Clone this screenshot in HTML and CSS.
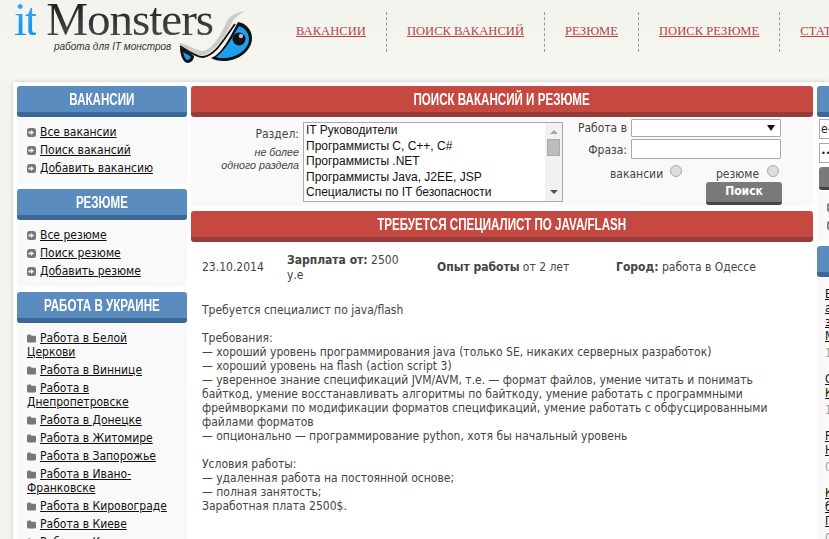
FILE: index.html
```html
<!DOCTYPE html>
<html lang="en">
<head>
  <meta charset="UTF-8" />
  <title>itMonsters - работа для IT монстров</title>
  <link rel="stylesheet" href="styles.css">
</head>
<body>

  <svg class="sprites" width="0" height="0">
    <symbol id="bullet" viewBox="0 0 9 9">
      <rect x="0" y="0" width="9" height="9" rx="2.500" fill="#777"/>
      <path d="M1.500 3.500h2.500V2l3 2.500-3 2.500V5.500H1.500z" fill="#eee"/>
    </symbol>
    <symbol id="folder" viewBox="0 0 9 9">
      <path d="M0 2q0-1.500 1.500-1.500h2l1 1.200H7.500q1.500 0 1.500 1.300v4q0 1.500-1.500 1.500h-6q-1.500 0-1.500-1.500z" fill="#777"/>
    </symbol>
  </svg>

  <!-- Header -->
  <div class="header">
    <div class="logo">
      <div class="logo-name"><span class="logo-it">it</span><span class="logo-monsters">Monsters</span></div>
      <div class="logo-slogan">работа для IT монстров</div>
      <svg class="logo-eyes" width="88" height="62" viewBox="0 0 88 62">
        <path d="M6 38C14 38 22 45 30 46 40 46 50 28 54 18 56 12 62 8 73 6 66 10 62 13 60 18 54 30 46 44 32 50 22 52 14 44 6 38z" fill="#cbcbc7"/>
        <path d="M8 41C16 46 24 52 31 52 44 50 52 34 63 19" fill="none" stroke="#111" stroke-width="1.800"/>
        <path d="M8 42C12 44 18 48 22 51 22 55 19 58 15 58 11 57 8 50 8 42z" fill="#111"/>
        <path d="M11 47C13 48 17 50 19 52 18 54 17 55 15 55 13 54 12 51 11 47z" fill="#1d9be8"/>
        <path d="M66 17C74 18 80 25 80 33 80 46 66 56 52 56 46 56 42 55 39 53 50 49 58 32 66 17z" fill="#111"/>
        <path d="M67 21C73 23 77 28 77 34 77 44 65 53 52 53 48 53 46 53 44 52 53 46 60 33 67 21z" fill="#1e9ff0"/>
        <circle cx="67" cy="34" r="6.500" fill="#111"/>
        <circle cx="69" cy="31" r="2.200" fill="#bbb"/>
      </svg>
    </div>
    <ul class="top-menu">
      <li><a href="#">ВАКАНСИИ</a></li>
      <li><a href="#">ПОИСК ВАКАНСИЙ</a></li>
      <li><a href="#">РЕЗЮМЕ</a></li>
      <li><a href="#">ПОИСК РЕЗЮМЕ</a></li>
      <li><a href="#">СТАТЬИ</a></li>
    </ul>
  </div>

  <div class="page">

    <!-- Left column -->
    <div class="left-col">
      <div class="box">
        <h3 class="title blue"><span>ВАКАНСИИ</span></h3>
        <ul class="side-menu">
          <li><svg class="ico"><use href="#bullet"/></svg><a href="#">Все вакансии</a></li>
          <li><svg class="ico"><use href="#bullet"/></svg><a href="#">Поиск вакансий</a></li>
          <li><svg class="ico"><use href="#bullet"/></svg><a href="#">Добавить вакансию</a></li>
        </ul>
      </div>
      <div class="box">
        <h3 class="title blue"><span>РЕЗЮМЕ</span></h3>
        <ul class="side-menu">
          <li><svg class="ico"><use href="#bullet"/></svg><a href="#">Все резюме</a></li>
          <li><svg class="ico"><use href="#bullet"/></svg><a href="#">Поиск резюме</a></li>
          <li><svg class="ico"><use href="#bullet"/></svg><a href="#">Добавить резюме</a></li>
        </ul>
      </div>
      <div class="box">
        <h3 class="title blue"><span>РАБОТА В УКРАИНЕ</span></h3>
        <ul class="side-menu">
          <li><svg class="ico"><use href="#folder"/></svg><a href="#">Работа в Белой Церкови</a></li>
          <li><svg class="ico"><use href="#folder"/></svg><a href="#">Работа в Виннице</a></li>
          <li><svg class="ico"><use href="#folder"/></svg><a href="#">Работа в Днепропетровске</a></li>
          <li><svg class="ico"><use href="#folder"/></svg><a href="#">Работа в Донецке</a></li>
          <li><svg class="ico"><use href="#folder"/></svg><a href="#">Работа в Житомире</a></li>
          <li><svg class="ico"><use href="#folder"/></svg><a href="#">Работа в Запорожье</a></li>
          <li><svg class="ico"><use href="#folder"/></svg><a href="#">Работа в Ивано-Франковске</a></li>
          <li><svg class="ico"><use href="#folder"/></svg><a href="#">Работа в Кировограде</a></li>
          <li><svg class="ico"><use href="#folder"/></svg><a href="#">Работа в Киеве</a></li>
          <li><svg class="ico"><use href="#folder"/></svg><a href="#">Работа в Кременчуге</a></li>
        </ul>
      </div>
    </div>

    <!-- Main column -->
    <div class="main-col">
      <h3 class="title red"><span>ПОИСК ВАКАНСИЙ И РЕЗЮМЕ</span></h3>
      <div class="search">
        <div class="search-label">
          <div>Раздел:</div>
          <div class="search-hint">не более<br>одного раздела</div>
        </div>
        <div class="listbox">
          <div class="listbox-items">
            <div>IT Руководители</div>
            <div>Программисты C, C++, C#</div>
            <div>Программисты .NET</div>
            <div>Программисты Java, J2EE, JSP</div>
            <div>Специалисты по IT безопасности</div>
          </div>
          <div class="listbox-bar">
            <span class="arrow-up"></span>
            <span class="thumb"></span>
            <span class="arrow-down"></span>
          </div>
        </div>
        <div class="search-right">
          <div class="field">
            <label>Работа в</label>
            <div class="fake-select"><span class="arrow-select"></span></div>
          </div>
          <div class="field">
            <label>Фраза:</label>
            <div class="fake-input"></div>
          </div>
          <div class="radios">
            <span class="radio-name">вакансии</span><span class="radio"></span>
            <span class="radio-name">резюме</span><span class="radio"></span>
          </div>
          <div class="search-btn-row"><button class="search-btn">Поиск</button></div>
        </div>
      </div>

      <h3 class="title red"><span>ТРЕБУЕТСЯ СПЕЦИАЛИСТ ПО JAVA/FLASH</span></h3>
      <div class="job-head">
        <div>23.10.2014</div>
        <div class="job-salary"><b>Зарплата от:</b> 2500 у.е</div>
        <div><b>Опыт работы</b> от 2 лет</div>
        <div><b>Город:</b> работа в Одессе</div>
      </div>
      <div class="job-text">
        Требуется специалист по java/flash<br>
        <br>
        Требования:<br>
        — хороший уровень программирования java (только SE, никаких серверных разработок)<br>
        — хороший уровень на flash (action script 3)<br>
        — уверенное знание спецификаций JVM/AVM, т.е. — формат файлов, умение читать и понимать<br>
        байткод, умение восстанавливать алгоритмы по байткоду, умение работать с программными<br>
        фреймворками по модификации форматов спецификаций, умение работать с обфусцированными<br>
        файлами форматов<br>
        — опционально — программирование python, хотя бы начальный уровень<br>
        <br>
        Условия работы:<br>
        — удаленная работа на постоянной основе;<br>
        — полная занятость;<br>
        Заработная плата 2500$.
      </div>
    </div>

    <!-- Right column -->
    <div class="right-col">
      <div class="box">
        <h3 class="title blue">&nbsp;</h3>
        <div class="login">
          <div class="login-input">e-mail</div>
          <div class="login-input login-pass">•••••</div>
          <div class="login-btn"></div>
        </div>
        <ul class="side-menu">
          <li><svg class="ico"><use href="#bullet"/></svg></li>
          <li><svg class="ico"><use href="#bullet"/></svg></li>
        </ul>
      </div>
      <div class="box">
        <h3 class="title blue">&nbsp;</h3>
        <div class="news">
          <div class="news-item"><a href="#">В<br>а<br>з<br>М</a><div class="news-date">1</div></div>
          <div class="news-item"><a href="#">С<br>К</a><div class="news-date">1</div></div>
          <div class="news-item"><a href="#">Р<br>Н</a><div class="news-date">0</div></div>
          <div class="news-item"><a href="#">К<br>б<br>П</a><div class="news-date">0</div></div>
        </div>
      </div>
    </div>

  </div>

</body>
</html>
```

FILE: styles.css
```css
html, body {
  height: 100%;
  overflow: hidden;
}

body {
  margin: 0;
  background: #f4f4ee;
  font-family: "DejaVu Sans Condensed", "DejaVu Sans", sans-serif;
  font-stretch: condensed;
  font-size: 12px;
  color: #444;
}

.sprites {
  display: block;
}

ul {
  list-style: none;
  margin: 0;
  padding: 0;
}

a {
  color: #111;
}

/* header */
.header {
  height: 82px;
  display: flex;
  background: linear-gradient(to bottom, #f3f3ee, #f6f6f1);
}

.logo {
  position: relative;
  width: 281px;
  padding-left: 14px;
  flex-shrink: 0;
  box-sizing: border-box;
}

.logo-name {
  font-family: "Liberation Serif", serif;
  font-stretch: normal;
  font-size: 47px;
  line-height: 38px;
  letter-spacing: -1px;
  height: 40px;
  white-space: nowrap;
}

.logo-it {
  letter-spacing: -2px;
  background: linear-gradient(to bottom, #3fb3f2, #0a8fe8);
  -webkit-background-clip: text;
  background-clip: text;
  color: transparent;
}

.logo-monsters {
  margin-left: 10px;
  background: linear-gradient(to bottom, #111, #555);
  -webkit-background-clip: text;
  background-clip: text;
  color: transparent;
}

.logo-slogan {
  margin-left: 40px;
  font-family: "Liberation Sans", sans-serif;
  font-stretch: normal;
  font-style: italic;
  font-size: 10px;
  line-height: 14px;
  color: #333;
}

.logo-eyes {
  position: absolute;
  left: 172px;
  top: 5px;
}

.top-menu {
  display: flex;
  margin: 12px 0 0 -5px;
  height: 40px;
  white-space: nowrap;
}

.top-menu li {
  padding: 0 20px;
  border-right: 1px dashed #999;
  line-height: 39px;
  font-family: "Liberation Serif", serif;
  font-stretch: normal;
  font-size: 12.6px;
}

.top-menu a {
  color: #b8434a;
}

/* page columns */
.page {
  margin-left: 13px;
  padding: 4px;
  display: flex;
  gap: 4px;
  background: #fff;
  box-shadow: 0 0 4px rgba(0,0,0,0.2);
  min-height: 600px;
}

.left-col {
  width: 170px;
  flex-shrink: 0;
}

.main-col {
  width: 622px;
  flex-shrink: 0;
}

.right-col {
  width: 170px;
  flex-shrink: 0;
}

.box {
  margin-bottom: 5px;
  background: #f9f9f9;
}

.title {
  margin: 0;
  height: 26px;
  line-height: 27px;
  text-align: center;
  color: #fff;
  font-family: "Liberation Sans", sans-serif;
  font-stretch: normal;
  font-size: 16px;
  font-weight: bold;
  border-radius: 3px;
  border-bottom: 5px solid;
}

.title span {
  display: inline-block;
  white-space: nowrap;
  transform: scaleX(0.725);
}

.blue {
  background: #5b8cc0;
  border-bottom-color: #3a6897;
}

.red {
  background: #c54841;
  border-bottom-color: #973c38;
}

.side-menu {
  padding: 8px 10px 5px;
}

.side-menu li {
  line-height: 14px;
  margin-bottom: 4px;
}

.ico {
  width: 9px;
  height: 9px;
  margin-right: 4px;
  vertical-align: -1px;
}

/* search form */
.search {
  height: 89px;
  display: flex;
  background: #f9f9f9;
  margin-bottom: 5px;
}

.search-label {
  width: 108px;
  padding-top: 9px;
  text-align: right;
  line-height: 16px;
  flex-shrink: 0;
}

.search-hint {
  margin-top: 4px;
  font-family: "Liberation Sans", sans-serif;
  font-stretch: normal;
  font-size: 10.7px;
  line-height: 13px;
  font-style: italic;
}

.listbox {
  display: flex;
  width: 260px;
  height: 80px;
  box-sizing: border-box;
  margin: 5px 0 0 4px;
  border: 1px solid #aaa;
  background: #fff;
  flex-shrink: 0;
}

.listbox-items {
  flex: 1;
  padding-left: 2px;
  overflow: hidden;
  font-family: "Liberation Sans", sans-serif;
  font-stretch: normal;
  font-size: 12px;
  line-height: 15.5px;
  color: #111;
}

.listbox-bar {
  width: 17px;
  background: #f1f1f1;
  display: flex;
  flex-direction: column;
  align-items: center;
}

.arrow-up, .arrow-down {
  width: 0;
  height: 0;
  border-left: 4px solid transparent;
  border-right: 4px solid transparent;
}

.arrow-up {
  margin-top: 7px;
  border-bottom: 4px solid #a3a3a3;
}

.arrow-down {
  margin-top: auto;
  margin-bottom: 7px;
  border-top: 4px solid #505050;
}

.thumb {
  width: 13px;
  height: 17px;
  margin-top: 5px;
  background: #bcbcbc;
  border: 1px solid #aaa;
  box-sizing: border-box;
}

.search-right {
  width: 218px;
  padding-top: 2px;
}

.field {
  display: flex;
  align-items: center;
  margin-bottom: 2px;
}

.field label {
  width: 64px;
  text-align: right;
  margin-right: 4px;
}

.field + .field label {
  padding-top: 2px;
}

.fake-select, .fake-input {
  width: 150px;
  box-sizing: border-box;
  background: #fff;
  border: 1px solid #aaa;
  border-radius: 1px;
}

.fake-select {
  height: 18px;
  display: flex;
  align-items: center;
  justify-content: flex-end;
  padding-right: 4px;
}

.fake-input {
  height: 20px;
}

.arrow-select {
  width: 0;
  height: 0;
  margin-right: 1px;
  border-left: 4px solid transparent;
  border-right: 4px solid transparent;
  border-top: 6px solid #111;
}

.radios {
  display: flex;
  align-items: center;
  margin: 6px 0 0 47px;
  height: 18px;
}

.radio-name {
  width: 50px;
}

.radio-name + .radio + .radio-name {
  width: 41px;
  margin-left: 34px;
}

.radio {
  width: 12px;
  height: 12px;
  flex-shrink: 0;
  margin: -7px 0 0 10px;
  box-sizing: border-box;
  border-radius: 50%;
  border: 1px solid #aaa;
  background: #ddd;
}

.search-btn-row {
  display: flex;
  justify-content: flex-end;
  margin: -1px -1px 0 0;
}

.search-btn {
  width: 76px;
  height: 23px;
  padding: 0 0 2px;
  border: none;
  border-bottom: 3px solid #444;
  border-radius: 3px;
  background: #7a7a7a;
  color: #fff;
  font-family: "DejaVu Sans", sans-serif;
  font-stretch: condensed;
  font-size: 12px;
  font-weight: bold;
}

/* job */
.job-head {
  display: grid;
  grid-template-columns: 85px 150px 179px 1fr;
  align-items: center;
  height: 50px;
  padding: 1px 0 0 11px;
  box-sizing: border-box;
  line-height: 15px;
}

.job-salary {
  padding: 1px 30px 0 0;
}

.job-text {
  margin-top: 11px;
  padding-left: 11px;
  line-height: 14px;
  white-space: nowrap;
}

/* right column */
.login {
  padding: 2px 0 2px 2px;
  background: #fff;
}

.login-input {
  height: 18px;
  margin-bottom: 4px;
  border: 1px solid #aaa;
  background: #fff;
  padding-left: 1px;
  line-height: 18px;
  color: #222;
}

.login-pass {
  font-size: 9px;
}

.login-btn {
  height: 23px;
  background: #7a7a7a;
  border-bottom: 3px solid #444;
  border-radius: 3px;
  box-sizing: border-box;
}

.news {
  padding: 10px 8px;
}

.news-item {
  line-height: 14px;
  margin-bottom: 12px;
}

.news-date {
  margin-top: 3px;
  color: #999;
}
```
